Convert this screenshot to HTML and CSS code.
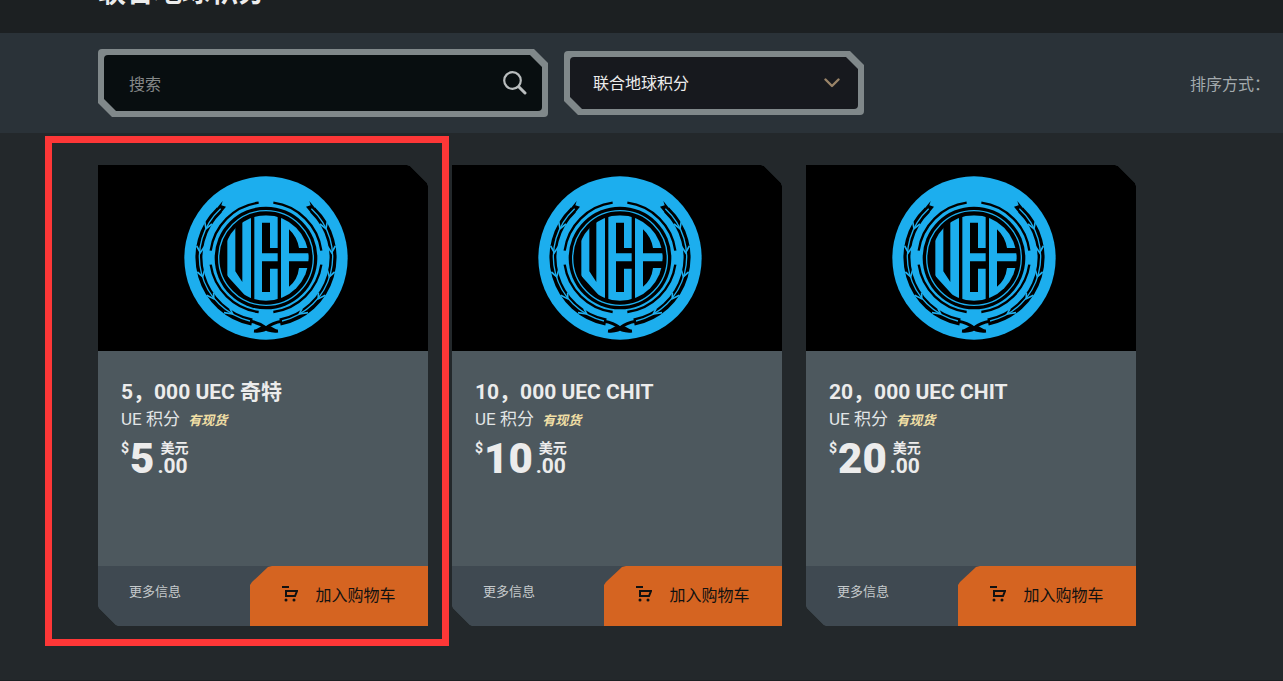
FILE: index.html
```html
<!DOCTYPE html>
<html lang="zh-CN">
<head>
  <meta charset="UTF-8">
  <meta name="viewport" content="width=device-width,initial-scale=1">
  <title>联合地球积分</title>
  <link rel="stylesheet" href="styles.css">
</head>
<body>
  <!-- shared artwork -->
  <svg class="sprite" width="0" height="0" aria-hidden="true">
    <defs>
      <clipPath id="disc"><circle cx="288" cy="278" r="128"/></clipPath>
      <g id="laurel" fill="none">
        <path stroke="#000" stroke-width="21" d="M148 134A197 197 0 0 0 246 470"/>
        <path fill="#000" d="M138 132L158 107L154 120L168 124L152 144z"/>
        <path stroke="#1caeee" stroke-width="4" d="M152 130A197 197 0 0 0 240 467"/>
        <path stroke="#1caeee" stroke-width="5" d="M104 168L108 190L126 176M80 242L91 262L103 244M82 320L98 334L104 314M110 390L131 400L131 382M162 442L188 446L180 430"/>
        <path stroke="#000" stroke-width="9" d="M240 468Q268 472 288 488M252 497Q280 500 298 484"/>
        <path stroke="#000" stroke-width="7" d="M266 112A168 168 0 0 0 122 256M122 298A168 168 0 0 0 266 440"/>
        <path fill="#000" d="M254 494l26-14 16 8-24 12z"/>
      </g>
    </defs>
    <symbol id="emblem" viewBox="42 32 492 492">
      <circle cx="288" cy="278" r="245" fill="#1caeee"/>
      <use href="#laurel"/>
      <use href="#laurel" transform="translate(576 0) scale(-1 1)"/>
      <circle cx="288" cy="278" r="154" fill="#000"/>
      <circle cx="288" cy="278" r="142" fill="none" stroke="#1caeee" stroke-width="4"/>
      <g clip-path="url(#disc)" fill="#1caeee">
        <path d="M172 150h24v168l21 32V150h26v260l-71-78z"/>
        <path d="M253 150h70v98h-23v-76h-24v92h47v24h-47v92h24v-70h23v98h-70z"/>
        <path d="M333 145h24q50 34 58 103h-28q-6-34-30-56v72h60v24h-60v76q26-20 30-56h28q-10 72-58 103h-24z"/>
      </g>
    </symbol>
    <symbol id="cart" viewBox="0 0 16 16">
      <path fill="none" stroke="#111" stroke-width="2" d="M0 1h7M3 5h12l-2 5H4V5"/>
      <circle cx="4" cy="14" r="1.5" fill="#111"/>
      <circle cx="12" cy="14" r="1.5" fill="#111"/>
    </symbol>
  </svg>

  <header class="page-head">
    <h1>联合地球积分</h1>
  </header>

  <form class="filters">
    <div class="frame search">
      <div class="frame-inner">
        <input type="text" placeholder="搜索" aria-label="搜索">
        <button type="button" class="search-btn" aria-label="搜索">
          <svg width="24" height="24" viewBox="0 0 24 24" fill="none" stroke="#b9bdbe" stroke-linecap="round">
            <circle cx="9.5" cy="9.5" r="8.3" stroke-width="2.2"/>
            <path stroke-width="3" d="M16 16l6 6"/>
          </svg>
        </button>
      </div>
    </div>
    <div class="frame category">
      <div class="frame-inner">
        <select aria-label="分类">
          <option>联合地球积分</option>
        </select>
        <svg class="chevron" width="16" height="10" viewBox="0 0 16 10" fill="none" stroke="#9a8468" stroke-width="2.4" stroke-linecap="round" stroke-linejoin="round"><path d="M1.5 1.5L8 8l6.500-6.500"/></svg>
      </div>
    </div>
    <span class="sort">排序方式：</span>
  </form>

  <main>
    <ul class="products">
      <li class="product selected">
        <article class="card">
          <div class="media"><svg class="emblem"><use href="#emblem"/></svg></div>
          <div class="info">
            <h2>5，000 UEC 奇特</h2>
            <p class="type">UE 积分 <em>有现货</em></p>
            <p class="price"><span class="sign">$</span><strong>5</strong><span class="rest"><span class="currency">美元</span><span class="cents">.00</span></span></p>
          </div>
          <div class="actions">
            <a href="#">更多信息</a>
            <button type="button"><svg width="16" height="16"><use href="#cart"/></svg>加入购物车</button>
          </div>
        </article>
      </li>
      <li class="product">
        <article class="card">
          <div class="media"><svg class="emblem"><use href="#emblem"/></svg></div>
          <div class="info">
            <h2>10，000 UEC CHIT</h2>
            <p class="type">UE 积分 <em>有现货</em></p>
            <p class="price"><span class="sign">$</span><strong>10</strong><span class="rest"><span class="currency">美元</span><span class="cents">.00</span></span></p>
          </div>
          <div class="actions">
            <a href="#">更多信息</a>
            <button type="button"><svg width="16" height="16"><use href="#cart"/></svg>加入购物车</button>
          </div>
        </article>
      </li>
      <li class="product">
        <article class="card">
          <div class="media"><svg class="emblem"><use href="#emblem"/></svg></div>
          <div class="info">
            <h2>20，000 UEC CHIT</h2>
            <p class="type">UE 积分 <em>有现货</em></p>
            <p class="price"><span class="sign">$</span><strong>20</strong><span class="rest"><span class="currency">美元</span><span class="cents">.00</span></span></p>
          </div>
          <div class="actions">
            <a href="#">更多信息</a>
            <button type="button"><svg width="16" height="16"><use href="#cart"/></svg>加入购物车</button>
          </div>
        </article>
      </li>
    </ul>
  </main>
</body>
</html>
```
FILE: styles.css
```css
:root {
  --bg: #23282b;
  --head: #1c2022;
  --bar: #2a3238;
  --line: #80888a;
  --card: #4d585e;
  --orange: #d56421;
  --text: #ececec;
}
* { box-sizing: border-box; }
body {
  margin: 0;
  background: var(--head);
  color: var(--text);
  font-family: Roboto, "Noto Sans CJK SC", sans-serif;
  font-size: 16px;
}
h1, h2, p, ul { margin: 0; padding: 0; }
input, select, button { font: inherit; border: 0; }
.sprite { position: absolute; }

.page-head {
  height: 33px;
  display: flex;
  align-items: flex-end;
  padding: 0 98px 22px;
}
.page-head h1 { font-size: 28px; line-height: 36px; }

.filters {
  display: flex;
  align-items: center;
  gap: 16px;
  padding: 16px 13px 16px 98px;
  background: var(--bar);
}
.frame {
  --cut: 14px;
  padding: 6px;
  background: var(--line);
  border-radius: 4px;
}
.frame, .frame-inner {
  clip-path: polygon(0 0, calc(100% - var(--cut)) 0, 100% var(--cut), 100% 100%, var(--cut) 100%, 0 calc(100% - var(--cut)));
}
.frame-inner {
  --cut: 12px;
  position: relative;
  display: flex;
  align-items: center;
  border-radius: 4px;
}
.search { flex: 0 1 450px; }
.search .frame-inner { background: #080e10; height: 56px; }
.search input {
  flex: 1;
  min-width: 0;
  height: 56px;
  padding: 2px 25px 0;
  background: none;
  color: var(--text);
}
.search input::placeholder { color: #858888; opacity: 1; }
.search-btn {
  display: flex;
  padding: 0 15px;
  background: none;
  cursor: pointer;
}
.category { flex: 0 1 300px; }
.category .frame-inner { background: #17191e; }
.category select {
  width: 100%;
  height: 52px;
  padding: 0 23px;
  appearance: none;
  background: none;
  color: var(--text);
}
.category option { background: #17191e; }
.chevron {
  position: absolute;
  right: 18px;
  pointer-events: none;
}
.sort { margin-left: auto; color: #a3aaad; white-space: nowrap; }

main { background: var(--bg); padding: 32px 98px 54px; }
.products {
  display: grid;
  grid-template-columns: repeat(auto-fill, 330px);
  gap: 24px;
  list-style: none;
}
.product { position: relative; }
.selected::after {
  content: '';
  position: absolute;
  inset: -29px -21px -20px -53px;
  border: 7px solid #fd3737;
  z-index: 1;
  pointer-events: none;
}
.card {
  background: var(--card);
  clip-path: polygon(0 0, calc(100% - 21px) 0, calc(100% - 18px) 1px, calc(100% - 1px) 18px, 100% 21px, 100% 100%, 21px 100%, 18px calc(100% - 1px), 1px calc(100% - 18px), 0 calc(100% - 21px));
}
.media {
  display: flex;
  justify-content: center;
  padding: 11px 0 11px 6px;
  background: #000;
}
.emblem { width: 164px; height: 164px; }
.info { min-height: 215px; padding: 27px 23px; }
.info h2 { font-size: 21px; line-height: 28px; }
.type { font-size: 17px; line-height: 26px; color: #e2e5e6; }
.type em {
  margin-left: 4px;
  font-size: 13px;
  font-weight: bold;
  color: #f0dfa5;
}
.price { display: flex; margin-top: 4px; font-weight: bold; }
.sign { font-size: 14px; line-height: 20px; }
.price strong { font-size: 42px; line-height: 42px; margin: 0 3px 0 1px; }
.rest { display: flex; flex-direction: column; }
.currency { font-size: 14px; line-height: 20px; padding-left: 3px; }
.cents { font-size: 21px; line-height: 16px; }
.actions {
  display: flex;
  height: 60px;
  background: #3f4951;
}
.actions a {
  flex: 1;
  padding-left: 31px;
  font-size: 13px;
  line-height: 52px;
  color: #c5cacc;
  text-decoration: none;
}
.actions button {
  width: 178px;
  display: flex;
  align-items: center;
  justify-content: center;
  gap: 17px;
  padding: 0 0 4px;
  background: var(--orange);
  color: #111;
  cursor: pointer;
  clip-path: polygon(22px 0, 100% 0, 100% 100%, 0 100%, 0 19px, 2px 16px, 18px 1px);
}
```
